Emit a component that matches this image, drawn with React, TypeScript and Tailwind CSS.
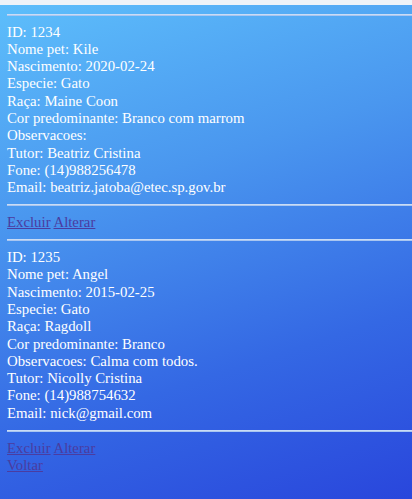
import React from "react";

const pets = [
  {
    id: "1234",
    nome: "Kile",
    nasc: "2020-02-24",
    especie: "Gato",
    raca: "Maine Coon",
    cor: "Branco com marrom",
    obs: "",
    tutor: "Beatriz Cristina",
    fone: "(14)988256478",
    email: "beatriz.jatoba@etec.sp.gov.br",
  },
  {
    id: "1235",
    nome: "Angel",
    nasc: "2015-02-25",
    especie: "Gato",
    raca: "Ragdoll",
    cor: "Branco",
    obs: "Calma com todos.",
    tutor: "Nicolly Cristina",
    fone: "(14)988754632",
    email: "nick@gmail.com",
  },
];

function Hr() {
  return <div className="h-[2px] my-[7.8px] bg-[#c9dcf6] border-b border-[#a9c6f0]" />;
}

export default function App() {
  return (
    <div className="w-[412px] h-[499px] overflow-hidden bg-[#eef3f8]">
      <div
        className="mt-[5px] h-[494px] bg-[linear-gradient(162deg,#5dbefb_0%,#4a97ef_35%,#3468e4_70%,#2946dc_100%)] pl-[7px] pt-[1px] text-white text-[14.8px] leading-[17.3px]"
        style={{ fontFamily: '"Liberation Serif", "Times New Roman", serif' }}
      >
        {pets.map((p) => (
          <div key={p.id}>
            <Hr />
            <div>
              <div>ID: {p.id}</div>
              <div>Nome pet: {p.nome}</div>
              <div>Nascimento: {p.nasc}</div>
              <div>Especie: {p.especie}</div>
              <div>Raça: {p.raca}</div>
              <div>Cor predominante: {p.cor}</div>
              <div>Observacoes: {p.obs}</div>
              <div>Tutor: {p.tutor}</div>
              <div>Fone: {p.fone}</div>
              <div>Email: {p.email}</div>
            </div>
            <Hr />
            <div>
              <a href="#" className="underline text-[#4b3ca0]">Excluir</a>{" "}
              <a href="#" className="underline text-[#4b3ca0]">Alterar</a>
            </div>
          </div>
        ))}
        <div>
          <a href="#" className="underline text-[#4b3ca0]">Voltar</a>
        </div>
      </div>
    </div>
  );
}
